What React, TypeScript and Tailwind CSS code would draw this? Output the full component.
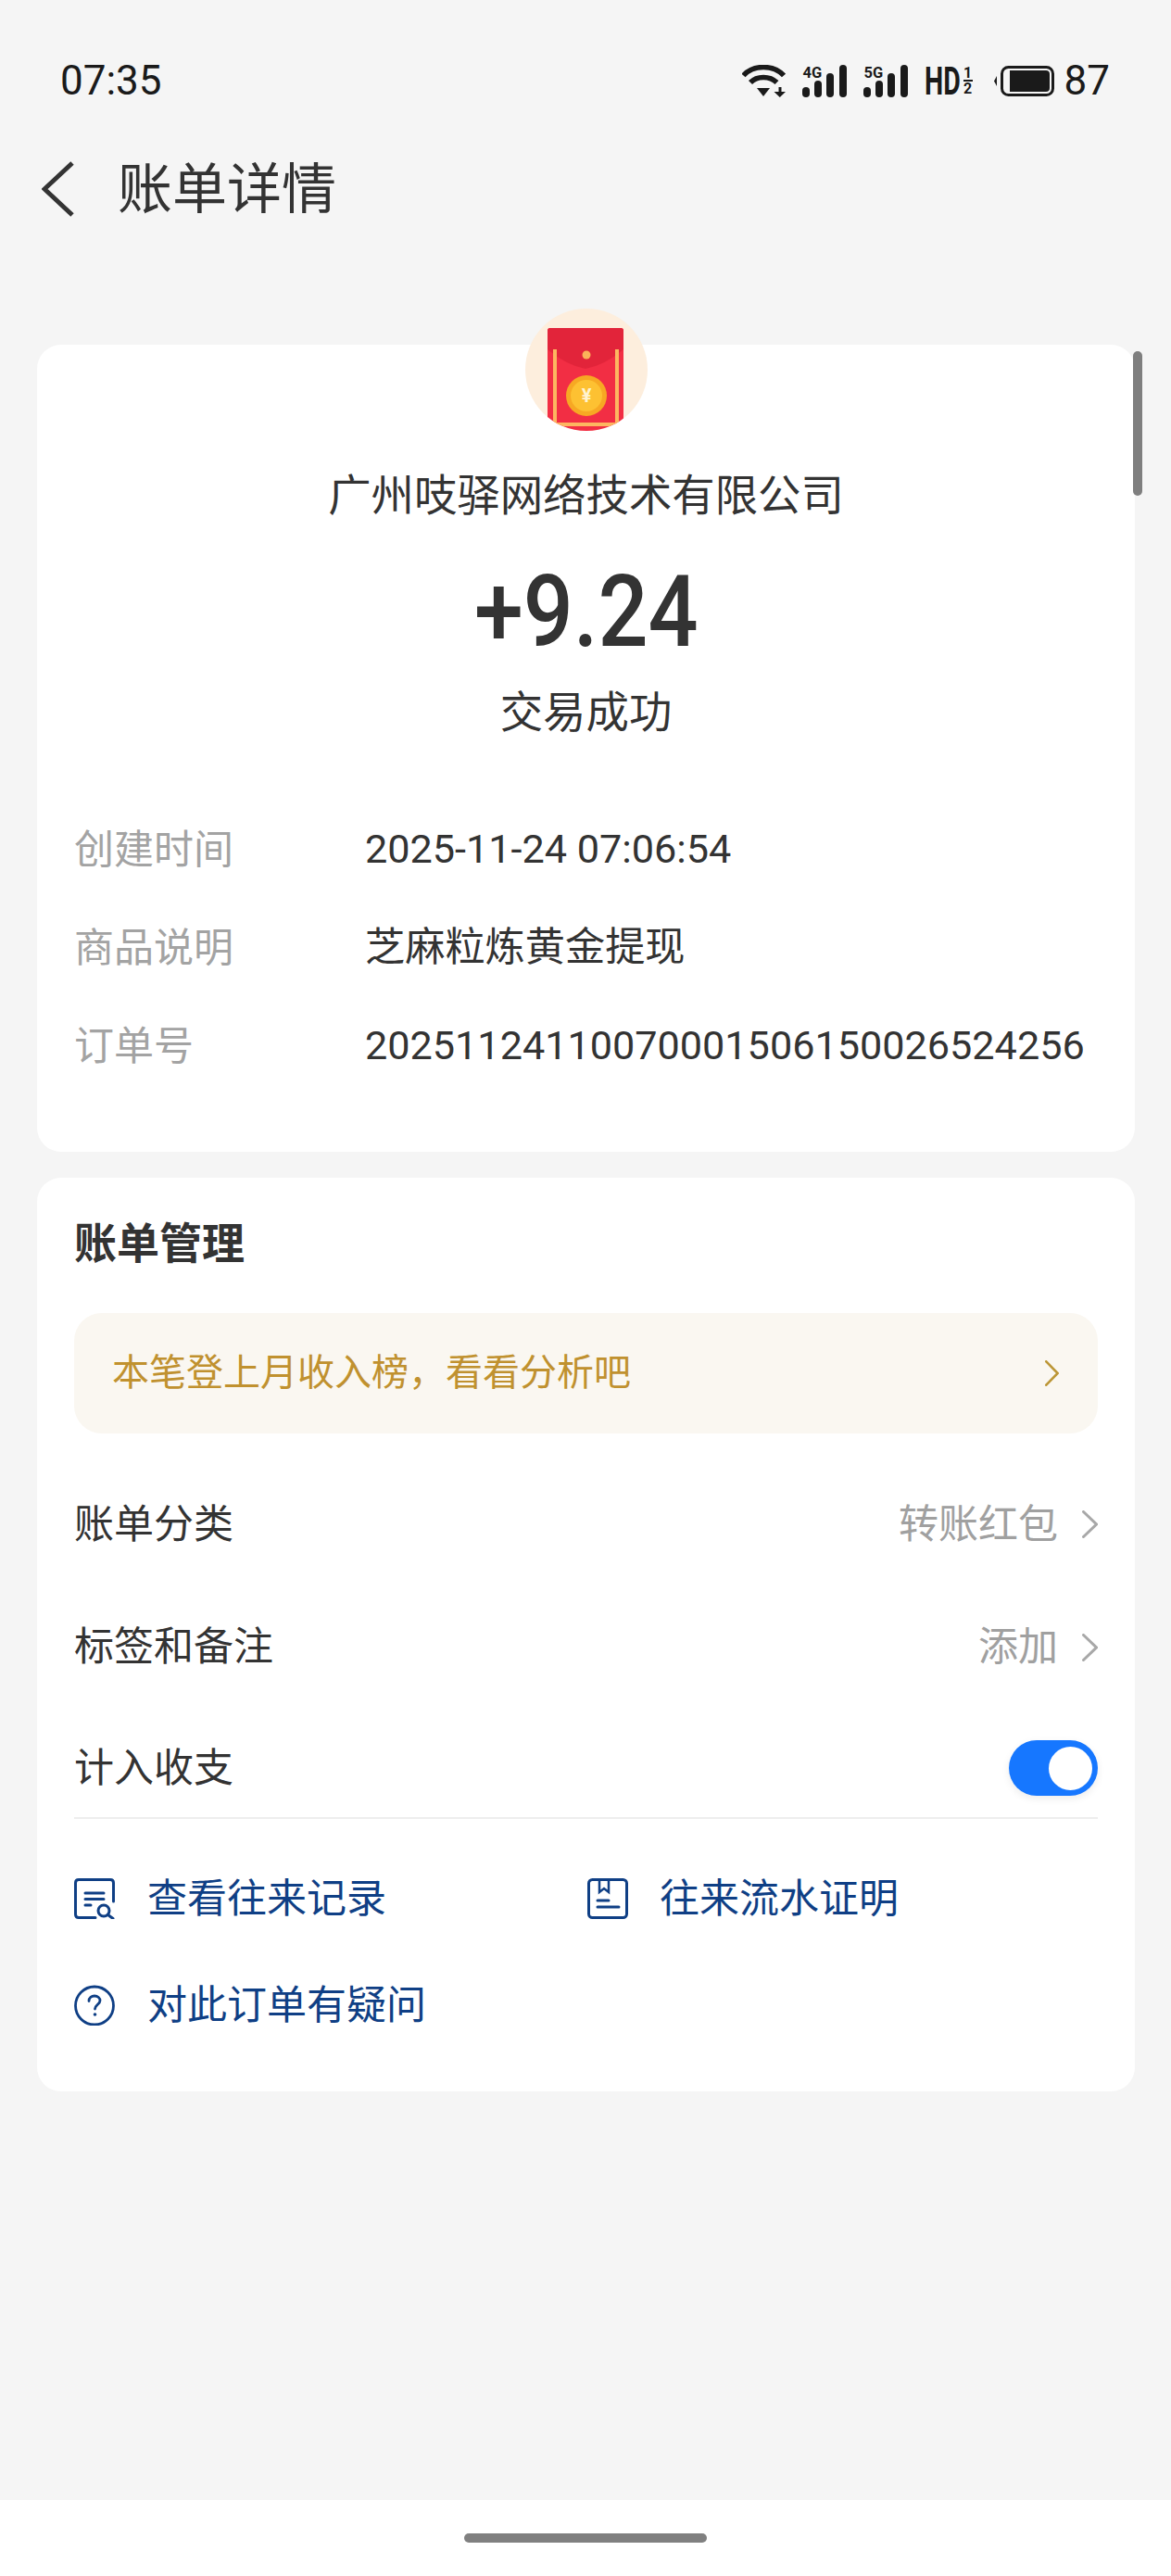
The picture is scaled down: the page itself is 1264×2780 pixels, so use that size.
import React from "react";

const font = { fontFamily: '"Roboto","Noto Sans CJK SC",sans-serif' };

function Chevron({ color, w, h, sw }: { color: string; w: number; h: number; sw: number }) {
  return (
    <svg width={w} height={h} viewBox={`0 0 ${w} ${h}`} fill="none">
      <polyline
        points={`${sw / 2},${sw / 2} ${w - sw / 2},${h / 2} ${sw / 2},${h - sw / 2}`}
        stroke={color}
        strokeWidth={sw}
        strokeLinecap="round"
        strokeLinejoin="miter"
      />
    </svg>
  );
}

function Wifi() {
  return (
    <svg width="47" height="35" viewBox="0 0 47 35" fill="none">
      <path d="M1.5 11.5 C12 -0.5 34 -0.5 45 11.5" stroke="#1a1a1a" strokeWidth="5.5" />
      <path d="M9 19 C16 11.5 30 11.5 37.5 19" stroke="#1a1a1a" strokeWidth="5.5" />
      <path d="M16 25 L30 25 L23 34 Z" fill="#1a1a1a" />
      <path d="M41 24 V31" stroke="#1a1a1a" strokeWidth="3" />
      <path d="M34.5 29 H47 L40.75 35 Z" fill="#1a1a1a" />
    </svg>
  );
}

function Signal({ label }: { label: string }) {
  return (
    <svg width="48" height="35" viewBox="0 0 48 35">
      <text x="0.5" y="13.5" fontSize="16.5" fontWeight="700" fill="#1a1a1a" fontFamily="Roboto">
        {label}
      </text>
      <rect x="0" y="24" width="8" height="11" rx="4" fill="#1a1a1a" />
      <rect x="13" y="17" width="8" height="18" rx="4" fill="#1a1a1a" />
      <rect x="26" y="9" width="8" height="26" rx="4" fill="#1a1a1a" />
      <rect x="40" y="0" width="8" height="35" rx="4" fill="#1a1a1a" />
    </svg>
  );
}

function HD() {
  return (
    <div className="flex h-[33px] w-[52px] items-center justify-between text-[#1a1a1a]">
      <div className="flex h-[33px] w-[40px] items-center">
        <span className="block origin-left scale-x-[0.68] text-[42px] font-bold leading-[33px]">HD</span>
      </div>
      <div className="flex w-[10px] flex-col items-center text-[16px] font-bold leading-[15px]">
        <span className="block h-[15px]">1</span>
        <span className="block h-[2px] w-[10px] bg-[#1a1a1a]" />
        <span className="block h-[15px]">2</span>
      </div>
    </div>
  );
}

function Battery() {
  return (
    <svg width="65" height="33" viewBox="0 0 65 33">
      <path d="M3 11 L0 16.5 L3 22 Z" fill="#1a1a1a" />
      <rect x="8.5" y="1.5" width="55" height="30" rx="7" fill="none" stroke="#1a1a1a" strokeWidth="3" />
      <path d="M17 5 H56 Q60 5 60 9 V24 Q60 28 56 28 H17 Z" fill="#1a1a1a" />
    </svg>
  );
}

function RedPacket() {
  return (
    <svg width="132" height="132" viewBox="0 0 132 132">
      <defs>
        <clipPath id="packetClip">
          <circle cx="66" cy="66" r="66" />
        </clipPath>
      </defs>
      <circle cx="66" cy="66" r="66" fill="#fdeedd" />
      <g clipPath="url(#packetClip)">
        <rect x="24" y="21" width="82" height="120" rx="3" fill="#f22e44" />
        <path d="M24 24 Q24 21 27 21 H103 Q106 21 106 24 V44 Q86 61 65 65 Q44 61 24 44 Z" fill="#e2243a" />
        <rect x="30" y="44" width="4" height="82" fill="#fdb660" />
        <rect x="97" y="44" width="4" height="82" fill="#fdb660" />
        <rect x="30" y="123" width="71" height="4" fill="#fdb660" />
        <circle cx="66" cy="50" r="4.5" fill="#fbb35a" />
        <circle cx="66" cy="94" r="22" fill="#f7a823" />
        <circle cx="66" cy="94" r="17" fill="#fdc132" />
        <text x="66" y="101" fontSize="20" fontWeight="700" textAnchor="middle" fill="#fff3d0" fontFamily="Roboto">
          ¥
        </text>
      </g>
    </svg>
  );
}

function RecordIcon() {
  return (
    <svg width="44" height="44" viewBox="0 0 44 44" fill="none" stroke="#0f3f85" strokeWidth="3">
      <path d="M23 42.5 H5 Q1.5 42.5 1.5 39 V5 Q1.5 1.5 5 1.5 H39 Q42.5 1.5 42.5 5 V25" strokeLinecap="round" />
      <path d="M12 16 H32 M12 22.5 H32 M12 29 H18" strokeLinecap="round" />
      <circle cx="32" cy="35" r="6" />
      <path d="M36.5 39.5 L42 43.5" strokeLinecap="round" />
    </svg>
  );
}

function BookIcon() {
  return (
    <svg width="44" height="44" viewBox="0 0 44 44" fill="none" stroke="#0f3f85" strokeWidth="3">
      <rect x="1.5" y="1.5" width="41" height="41" rx="4" />
      <path d="M13 2 V15 L18 11 L23 15 V2" strokeWidth="2.5" />
      <path d="M11 24 H23 M11 31 H34" strokeLinecap="round" />
    </svg>
  );
}

function QuestionIcon() {
  return (
    <svg width="44" height="44" viewBox="0 0 44 44" fill="none" stroke="#0f3f85" strokeWidth="2.8">
      <circle cx="22" cy="22.5" r="20.5" />
      <path d="M16 17.5 C16 13.5 19 12 22 12 C25.5 12 28 14.2 28 17 C28 21 22.5 21.5 22.5 26" strokeLinecap="round" />
      <circle cx="22.5" cy="32" r="1.8" fill="#0f3f85" stroke="none" />
    </svg>
  );
}

function Info({ label, value }: { label: string; value: string }) {
  return (
    <div className="flex h-[106px] items-center">
      <div className="w-[314px] text-[#a3a3a3]">{label}</div>
      <div className="whitespace-nowrap text-[43.2px] text-[#333333]">{value}</div>
    </div>
  );
}

export default function App() {
  return (
    <div style={font} className="relative flex h-[2780px] w-[1264px] flex-col overflow-hidden bg-[#f5f5f5] text-[43px] text-[#333333]">
      {/* status bar */}
      <div className="mt-[60px] flex h-[54px] items-center justify-between pl-[65px] pr-[66px] text-[#1a1a1a]">
        <span className="text-[44px] leading-none">07:35</span>
        <div className="flex items-center">
          <Wifi />
          <div className="ml-[18px]"><Signal label="4G" /></div>
          <div className="ml-[18px]"><Signal label="5G" /></div>
          <div className="ml-[18px]"><HD /></div>
          <div className="ml-[23px]"><Battery /></div>
          <span className="ml-[11px] text-[44px] leading-none">87</span>
        </div>
      </div>

      {/* header */}
      <div className="mt-[40px] flex h-[100px] items-center pl-[45px]">
        <svg width="36" height="60" viewBox="0 0 36 60" fill="none">
          <polyline points="33,2 3,30 33,58" stroke="#333333" strokeWidth="5" />
        </svg>
        <h1 className="ml-[46px] text-[59px] font-normal leading-none">账单详情</h1>
      </div>

      {/* summary card */}
      <div className="relative ml-[40px] mr-[39px] mt-[118px] h-[871px] rounded-[26px] bg-white">
        <div className="absolute left-[527px] top-[-39px]">
          <RedPacket />
        </div>
        <div className="flex flex-col items-center pt-[134px]">
          <div className="flex h-[60px] items-center text-[46.4px]">广州吱驿网络技术有限公司</div>
          <div className="mt-[34px] flex h-[120px] items-center">
            <span className="inline-block origin-center scale-x-[0.89] text-[107px] font-medium leading-none">+9.24</span>
          </div>
          <div className="mt-[20px] flex h-[60px] items-center text-[46.4px]">交易成功</div>
        </div>
        <div className="mt-[64px] px-[40px]">
          <Info label="创建时间" value="2025-11-24 07:06:54" />
          <Info label="商品说明" value="芝麻粒炼黄金提现" />
          <Info label="订单号" value="20251124110070001506150026524256" />
        </div>
      </div>

      {/* manage card */}
      <div className="ml-[40px] mr-[39px] mt-[28px] h-[986px] rounded-[26px] bg-white px-[40px] pt-[41px]">
        <div className="flex h-[60px] items-center text-[46px] font-bold">账单管理</div>
        <div className="mt-[45px] flex h-[130px] items-center justify-between rounded-[30px] bg-[#faf7f1] pl-[41px] pr-[42px] text-[40px] text-[#c0912f]">
          <span>本笔登上月收入榜，看看分析吧</span>
          <Chevron color="#bc9636" w={15} h={28} sw={2.6} />
        </div>
        <div className="mt-[32px] flex h-[132px] items-center justify-between">
          <span>账单分类</span>
          <div className="flex items-center text-[#a0a0a0]">
            <span>转账红包</span>
            <span className="ml-[26px]"><Chevron color="#a8a8a8" w={17} h={30} sw={3} /></span>
          </div>
        </div>
        <div className="flex h-[133px] items-center justify-between">
          <span>标签和备注</span>
          <div className="flex items-center text-[#a0a0a0]">
            <span>添加</span>
            <span className="ml-[26px]"><Chevron color="#a8a8a8" w={17} h={30} sw={3} /></span>
          </div>
        </div>
        <div className="mt-[11px] flex h-[108px] items-center justify-between border-b-2 border-[#eeeeee]">
          <span>计入收支</span>
          <div className="flex h-[60px] w-[96px] items-center justify-end rounded-full bg-[#1677ff] pr-[6px] shadow-[0_3px_8px_rgba(0,0,0,0.08)]">
            <div className="h-[47px] w-[47px] rounded-full bg-white" />
          </div>
        </div>
        <div className="mt-[46px] grid grid-cols-[554px_1fr] gap-y-[35px] text-[#0f3f85]">
          <div className="flex h-[80px] items-center">
            <RecordIcon />
            <span className="ml-[35px]">查看往来记录</span>
          </div>
          <div className="flex h-[80px] items-center">
            <BookIcon />
            <span className="ml-[34px]">往来流水证明</span>
          </div>
          <div className="flex h-[80px] items-center">
            <QuestionIcon />
            <span className="ml-[35px]">对此订单有疑问</span>
          </div>
        </div>
      </div>

      {/* scrollbar indicator */}
      <div className="absolute left-[1223px] top-[379px] h-[156px] w-[10px] rounded-full bg-[#7f7f7f]" />

      {/* gesture bar */}
      <div className="mt-auto flex h-[82px] items-start justify-center bg-white pt-[36px]">
        <div className="h-[10px] w-[262px] rounded-full bg-[#808080]" />
      </div>
    </div>
  );
}
